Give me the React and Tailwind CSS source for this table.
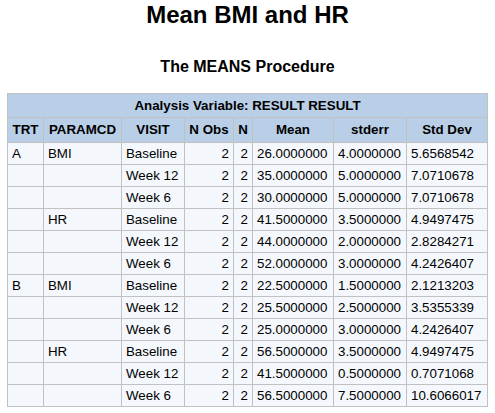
import React from 'react';

const rows = [
  ['A', 'BMI', 'Baseline', '2', '2', '26.0000000', '4.0000000', '5.6568542'],
  ['', '', 'Week 12', '2', '2', '35.0000000', '5.0000000', '7.0710678'],
  ['', '', 'Week 6', '2', '2', '30.0000000', '5.0000000', '7.0710678'],
  ['', 'HR', 'Baseline', '2', '2', '41.5000000', '3.5000000', '4.9497475'],
  ['', '', 'Week 12', '2', '2', '44.0000000', '2.0000000', '2.8284271'],
  ['', '', 'Week 6', '2', '2', '52.0000000', '3.0000000', '4.2426407'],
  ['B', 'BMI', 'Baseline', '2', '2', '22.5000000', '1.5000000', '2.1213203'],
  ['', '', 'Week 12', '2', '2', '25.5000000', '2.5000000', '3.5355339'],
  ['', '', 'Week 6', '2', '2', '25.0000000', '3.0000000', '4.2426407'],
  ['', 'HR', 'Baseline', '2', '2', '56.5000000', '3.5000000', '4.9497475'],
  ['', '', 'Week 12', '2', '2', '41.5000000', '0.5000000', '0.7071068'],
  ['', '', 'Week 6', '2', '2', '56.5000000', '7.5000000', '10.6066017'],
];

// N Obs and N are right aligned, the stats columns come out left aligned
const cols = [
  { label: 'TRT', w: 'w-[36px]', align: 'text-left' },
  { label: 'PARAMCD', w: 'w-[78px]', align: 'text-left' },
  { label: 'VISIT', w: 'w-[63px]', align: 'text-left' },
  { label: 'N Obs', w: 'w-[49px]', align: 'text-right' },
  { label: 'N', w: 'w-[19px]', align: 'text-right' },
  { label: 'Mean', w: 'w-[81px]', align: 'text-left' },
  { label: 'stderr', w: 'w-[73px]', align: 'text-left' },
  { label: 'Std Dev', w: 'w-[81px]', align: 'text-left' },
];

export default function App() {
  return (
    <div className="min-h-[413px] bg-white text-black font-['Liberation_Sans',Arial,sans-serif]">
      <h1 className="pt-[1px] text-center text-[24px] leading-[28px] font-bold">Mean BMI and HR</h1>
      <h2 className="mt-[29px] text-center text-[16px] leading-[18px] font-bold">The MEANS Procedure</h2>

      <table className="mx-auto mt-[17px] w-[480px] table-fixed border-collapse border border-[#c1c1c1] text-[13.333px] leading-[16px]">
        <colgroup>
          {cols.map((c) => (
            <col key={c.label} className={c.w} />
          ))}
        </colgroup>
        <thead>
          <tr className="h-[24px] bg-[#b9cfe7]">
            <th colSpan={8} className="border border-[#c1c1c1] px-[4px] text-center font-bold">
              Analysis Variable: RESULT RESULT
            </th>
          </tr>
          <tr className="h-[25px] bg-[#b9cfe7]">
            {cols.map((c) => (
              <th key={c.label} className="border border-[#c1c1c1] px-[2px] text-center font-bold whitespace-nowrap">
                {c.label}
              </th>
            ))}
          </tr>
        </thead>
        <tbody>
          {rows.map((r, i) => (
            <tr key={i} className="h-[22px] bg-[#f4f8fc]">
              {r.map((v, j) => (
                <td key={j} className={`border border-[#c1c1c1] px-[4px] whitespace-nowrap ${cols[j].align}`}>
                  {v}
                </td>
              ))}
            </tr>
          ))}
        </tbody>
      </table>
    </div>
  );
}
